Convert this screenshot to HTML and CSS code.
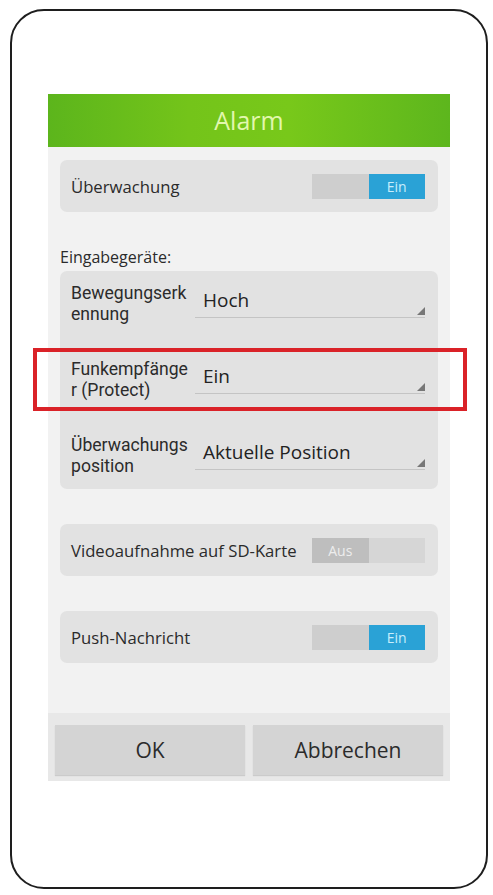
FILE: index.html
```html
<!DOCTYPE html>
<html lang="de">
<head>
    <meta charset="UTF-8">
    <meta name="viewport" content="width=device-width, initial-scale=1.0">
    <title>Alarm</title>
    <link rel="stylesheet" href="styles.css">
</head>
<body>
    <div class="phone">
        <div class="dialog">
            <div class="dialog-title">Alarm</div>

            <div class="dialog-body">
                <div class="card card-switch">
                    <span class="card-label">Überwachung</span>
                    <div class="switch on">
                        <span class="switch-off"></span>
                        <span class="switch-on">Ein</span>
                    </div>
                </div>

                <div class="section-label">Eingabegeräte:</div>

                <div class="card card-group">
                    <div class="select-row">
                        <div class="row-label">Bewegungserk<br>ennung</div>
                        <div class="select">Hoch<span class="select-arrow"></span></div>
                    </div>
                    <div class="select-row highlighted">
                        <div class="row-label">Funkempfänge<br>r (Protect)</div>
                        <div class="select">Ein<span class="select-arrow"></span></div>
                    </div>
                    <div class="select-row">
                        <div class="row-label">Überwachungs<br>position</div>
                        <div class="select">Aktuelle Position<span class="select-arrow"></span></div>
                    </div>
                </div>

                <div class="card card-switch">
                    <span class="card-label">Videoaufnahme auf SD-Karte</span>
                    <div class="switch off">
                        <span class="switch-off">Aus</span>
                        <span class="switch-on"></span>
                    </div>
                </div>

                <div class="card card-switch">
                    <span class="card-label">Push-Nachricht</span>
                    <div class="switch on">
                        <span class="switch-off"></span>
                        <span class="switch-on">Ein</span>
                    </div>
                </div>
            </div>

            <div class="dialog-buttons">
                <button class="btn">OK</button>
                <button class="btn">Abbrechen</button>
            </div>
        </div>
    </div>
</body>
</html>
```

FILE: styles.css
```css
* {
    margin: 0;
    padding: 0;
    box-sizing: border-box;
}

body {
    font-family: 'Open Sans', 'Roboto', sans-serif;
    background-color: #ffffff;
    color: #2b2b2b;
}

/* Phone outline */
.phone {
    width: 478px;
    height: 880px;
    margin: 9px 0 0 10px;
    border: 2px solid #1e1e1e;
    border-radius: 34px;
    padding: 83px 0 0 36px;
}

.dialog {
    width: 402px;
    background: #f2f2f2;
}

.dialog-title {
    height: 53px;
    line-height: 53px;
    text-align: center;
    font-size: 25px;
    color: #e2f7ae;
    background: linear-gradient(90deg, #5cb51c 0%, #74c41a 35%, #78c81a 60%, #5db61d 100%);
}

.dialog-body {
    padding: 13px 12px 50px;
}

.card {
    background: #e2e2e2;
    border-radius: 7px;
}

.card-switch {
    display: flex;
    align-items: center;
    justify-content: space-between;
    height: 52px;
    padding: 0 13px 0 11px;
    margin-bottom: 35px;
}

.card-switch:last-child {
    margin-bottom: 0;
}

.card-label {
    font-size: 16.7px;
}

/* On/off switch */
.switch {
    display: flex;
    width: 113px;
    height: 25px;
    font-size: 14px;
}

.switch span {
    flex: 1;
    display: flex;
    align-items: center;
    justify-content: center;
}

.switch.on .switch-off {
    background: #cecece;
}

.switch.on .switch-on {
    background: #2aa2d6;
    color: #c8eefc;
}

.switch.off .switch-off {
    background: #bebebe;
    color: #ededed;
}

.switch.off .switch-on {
    background: #d6d6d6;
}

.section-label {
    font-size: 16px;
    line-height: 20px;
    margin: 1px 0 4px;
}

/* Grouped select rows */
.card-group {
    display: flex;
    flex-direction: column;
    gap: 36px;
    padding: 13px 13px 13px 11px;
    margin-bottom: 35px;
}

.select-row {
    position: relative;
    display: flex;
    height: 40px;
}

.row-label {
    width: 124px;
    margin-top: -1px;
    font-family: 'Roboto', sans-serif;
    font-size: 17.6px;
    line-height: 21px;
}

.select {
    position: relative;
    flex: 1;
    height: 34px;
    padding: 5px 0 0 8px;
    font-size: 19px;
    line-height: 22px;
    color: #222;
    border-bottom: 1px solid #c4c4c4;
}

.select-arrow {
    position: absolute;
    right: 0;
    bottom: 2px;
    width: 0;
    height: 0;
    border-left: 8px solid transparent;
    border-bottom: 8px solid #777777;
}

/* Red frame drawn over the second row */
.highlighted::after {
    content: '';
    position: absolute;
    top: -12px;
    left: -38px;
    right: -42px;
    bottom: -11px;
    border: 4px solid #da2228;
}

.dialog-buttons {
    display: flex;
    gap: 8px;
    padding: 12px 7px 6px;
    background: #e8e8e8;
}

.btn {
    flex: 1;
    height: 50px;
    border: none;
    background: #d4d4d4;
    box-shadow: 0 1px 1px rgba(0, 0, 0, 0.12);
    font-family: inherit;
    font-size: 21px;
    color: #2b2b2b;
}
```
